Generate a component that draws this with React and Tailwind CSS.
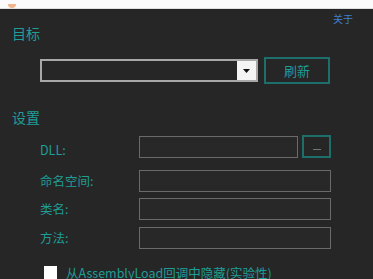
export default function App() {
  const font = { fontFamily: '"Noto Sans CJK SC", "Noto Sans", sans-serif' };
  const teal = "text-[#1f9d97]";
  const input = "h-[22px] bg-[#282828] border border-[#6a6a6a]";
  return (
    <div className="w-[373px] h-[279px] bg-[#262626] overflow-hidden flex flex-col" style={font}>
      <div className="h-[9px] bg-[#fbfbfb] border-b border-[#e0e0e0] shrink-0 flex items-end pl-[8px]">
        <div className="w-[8px] h-[4px] rounded-b-full bg-[#f3b48a]" />
      </div>
      <div className="h-[16px] flex justify-end pr-[20px] pt-[4px]">
        <span className="text-[10px] leading-[12px] text-[#3f7fd6]">关于</span>
      </div>
      <div className={`h-[16px] pl-[12px] text-[14px] leading-[16px] ${teal}`}>目标</div>
      <div className="mt-[16px] flex items-center pl-[40px] gap-[6px]">
        <div className="w-[218px] h-[23px] border-2 border-[#a8a8a8] bg-[#262626] flex justify-end">
          <div className="w-[19px] h-full bg-[#f4f4f4] flex items-center justify-center">
            <svg width="7" height="4" viewBox="0 0 7 4"><path d="M0 0H7L3.5 4Z" fill="#111" /></svg>
          </div>
        </div>
        <div className={`w-[66px] h-[27px] border-2 border-[#1c6f6a] flex items-center justify-center text-[13px] ${teal}`}>刷新</div>
      </div>
      <div className={`mt-[25px] h-[16px] pl-[12px] text-[14px] leading-[16px] ${teal}`}>设置</div>
      <div className="mt-[10px] flex items-center pl-[40px]">
        <div className={`w-[99px] text-[12.5px] leading-[16px] pt-[6px] ${teal}`}>DLL:</div>
        <div className={`w-[159px] ${input}`} />
        <div className="ml-[4px] w-[29px] h-[23px] border-2 border-[#1c6f6a] flex items-center justify-center pt-[6px]">
          <div className="w-[8px] h-[1px] bg-[#6a7a78]" />
        </div>
      </div>
      <div className="mt-[12px] flex items-center pl-[40px]">
        <div className={`w-[99px] text-[12.5px] leading-[16px] ${teal}`}>命名空间:</div>
        <div className={`w-[192px] ${input}`} />
      </div>
      <div className="mt-[6px] flex items-center pl-[40px]">
        <div className={`w-[99px] text-[12.5px] leading-[16px] ${teal}`}>类名:</div>
        <div className={`w-[192px] ${input}`} />
      </div>
      <div className="mt-[7px] flex items-center pl-[40px]">
        <div className={`w-[99px] text-[12.5px] leading-[16px] ${teal}`}>方法:</div>
        <div className={`w-[192px] ${input}`} />
      </div>
      <div className="mt-[17px] flex items-start pl-[44px]">
        <div className="w-[13px] h-[13px] bg-white shrink-0" />
        <div className={`ml-[9px] text-[12.5px] leading-[14px] whitespace-nowrap ${teal}`}>从AssemblyLoad回调中隐藏(实验性)</div>
      </div>
    </div>
  );
}
